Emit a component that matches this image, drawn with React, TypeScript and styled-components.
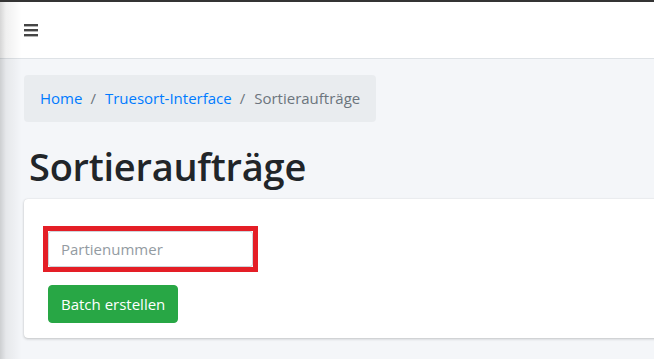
import React from "react";
import styled, { createGlobalStyle } from "styled-components";

const Global = createGlobalStyle`
  *, *::before, *::after { box-sizing: border-box; }
  html, body { margin: 0; padding: 0; }
  body {
    background: #f4f6f9;
    font-family: "Open Sans", "Noto Sans", Arial, sans-serif;
    color: #212529;
    overflow: hidden;
  }
`;

const Page = styled.div`
  position: relative;
  min-height: 100vh;
`;

const TopStrip = styled.div`
  height: 2px;
  background: #343434;
`;

const Navbar = styled.nav`
  display: flex;
  align-items: center;
  height: 57px;
  padding: 0 24px;
  background: #ffffff;
  border-bottom: 1px solid #dee2e6;
`;

const MenuButton = styled.button`
  display: flex;
  align-items: center;
  justify-content: center;
  padding: 0;
  margin: 0;
  border: 0;
  background: transparent;
  color: #454545;
  cursor: pointer;
`;

const SideShadow = styled.div`
  position: absolute;
  top: 2px;
  left: 0;
  bottom: 0;
  width: 22px;
  pointer-events: none;
  background: linear-gradient(to right, rgba(0, 0, 0, 0.16), rgba(0, 0, 0, 0.06) 6px, rgba(0, 0, 0, 0) 22px);
`;

const Content = styled.main`
  padding: 16px 0 0 24px;
`;

const Breadcrumb = styled.ol`
  display: flex;
  align-items: center;
  width: fit-content;
  margin: 0;
  padding: 12px 16px;
  list-style: none;
  background: #e9ecef;
  border-radius: 4px;
  font-size: 15px;
  line-height: 23px;
`;

const Crumb = styled.li<{ $active?: boolean }>`
  color: ${(p) => (p.$active ? "#6c757d" : "#007bff")};
  &:not(:first-child)::before {
    content: "/";
    display: inline-block;
    padding: 0 9px 0 8px;
    color: #6c757d;
  }
`;

const CrumbLink = styled.a`
  color: #007bff;
  text-decoration: none;
`;

const Title = styled.h1`
  margin: 24px 0 12px 5px;
  font-size: 38px;
  font-weight: 600;
  line-height: 41px;
  letter-spacing: -0.25px;
  color: #212529;
`;

const Card = styled.section`
  margin-right: -12px;
  padding: 27px 24px 15px 19px;
  background: #ffffff;
  border-radius: 4px;
  box-shadow: 0 0 1px rgba(0, 0, 0, 0.125), 0 1px 3px rgba(0, 0, 0, 0.2);
`;

const Form = styled.form`
  display: flex;
  flex-direction: column;
  align-items: flex-start;
  gap: 13px;
`;

const Highlight = styled.div`
  display: flex;
  border: 5px solid #e41e26;
`;

const Input = styled.input`
  width: 205px;
  height: 36px;
  padding: 0 12px;
  font-family: inherit;
  font-size: 15px;
  color: #495057;
  background: #fff;
  border: 1px solid #ced4da;
  border-radius: 3px;
  outline: none;
  &::placeholder { color: #939ba2; }
`;

const Button = styled.button`
  height: 38px;
  margin-left: 5px;
  padding: 0 12px;
  font-family: inherit;
  font-size: 15px;
  color: #ffffff;
  background: #28a745;
  border: 1px solid #28a745;
  border-radius: 4px;
  cursor: pointer;
`;

const BarsIcon = () => (
  <svg width="14" height="13" viewBox="0 0 14 13" aria-hidden="true">
    <rect x="0" y="0" width="14" height="2.4" fill="currentColor" />
    <rect x="0" y="5" width="14" height="2.4" fill="currentColor" />
    <rect x="0" y="10" width="14" height="2.4" fill="currentColor" />
  </svg>
);

export default function App() {
  return (
    <Page>
      <Global />
      <TopStrip />
      <Navbar>
        <MenuButton aria-label="Menü">
          <BarsIcon />
        </MenuButton>
      </Navbar>
      <Content>
        <Breadcrumb>
          <Crumb>
            <CrumbLink href="#">Home</CrumbLink>
          </Crumb>
          <Crumb>
            <CrumbLink href="#">Truesort-Interface</CrumbLink>
          </Crumb>
          <Crumb $active>Sortieraufträge</Crumb>
        </Breadcrumb>
        <Title>Sortieraufträge</Title>
        <Card>
          <Form onSubmit={(e) => e.preventDefault()}>
            <Highlight>
              <Input placeholder="Partienummer" />
            </Highlight>
            <Button type="submit">Batch erstellen</Button>
          </Form>
        </Card>
      </Content>
      <SideShadow />
    </Page>
  );
}
